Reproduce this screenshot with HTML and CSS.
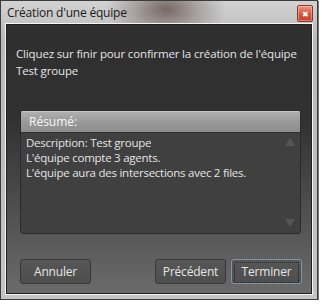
FILE: index.html
```html
<!DOCTYPE html>
<html lang="fr">
<head>
  <meta charset="UTF-8">
  <title>Création d'une équipe</title>
  <link rel="stylesheet" href="styles.css">
</head>
<body>

<!-- FENETRE -->
<div class="window">
  <div class="titlebar">
    <span class="title">Création d'une équipe</span>
    <span class="close">&#x2716;</span>
  </div>

  <div class="content">
    <p class="message">Cliquez sur finir pour confirmer la création de l'équipe<br>Test groupe</p>

    <!-- RESUME -->
    <div class="summary">
      <div class="summary-head">Résumé:</div>
      <div class="summary-body">
        <div class="lines">
          Description: Test groupe<br>
          L'équipe compte 3 agents.<br>
          L'équipe aura des intersections avec 2 files.
        </div>
        <div class="scroll">
          <span class="arrow up"></span>
          <span class="arrow down"></span>
        </div>
      </div>
    </div>

    <!-- BOUTONS -->
    <div class="buttons">
      <button class="btn">Annuler</button>
      <span class="spacer"></span>
      <button class="btn">Précédent</button>
      <button class="btn default"><span>Terminer</span></button>
    </div>
  </div>
</div>

</body>
</html>
```

FILE: styles.css
```css
body {
  margin: 0;
  background: #fff;
  font-family: "Open Sans", Arial, sans-serif;
  font-size: 12px;
}

.window {
  width: 318px;
  height: 300px;
  box-sizing: border-box;
  border: 1px solid #3c3c3c;
  padding: 0 4px 4px;
  display: flex;
  flex-direction: column;
  background:
    radial-gradient(ellipse 60px 34px at 165px 8px, rgba(90,70,66,0.75), rgba(90,70,66,0.3) 55%, rgba(90,70,66,0) 100%),
    linear-gradient(180deg, #d2d2d2, #b9b9b9 40px, #c4c4c4);
  box-shadow: 1px 1px 0 #777;
}

.titlebar {
  height: 22px;
  display: flex;
  align-items: center;
  justify-content: space-between;
  padding-left: 2px;
}

.title {
  color: #1b1b1b;
  letter-spacing: -0.2px;
}

.close {
  width: 14px;
  height: 15px;
  margin-top: 2px;
  border: 1px solid #8a3a2c;
  border-radius: 2px;
  background: linear-gradient(180deg, #f09580, #d65a43 50%, #c4412c);
  color: #fff;
  font-size: 8px;
  line-height: 15px;
  text-align: center;
  box-shadow: inset 0 0 0 1px rgba(255,255,255,0.35);
}

.content {
  flex: 1;
  border: 1px solid #f4f4f4;
  box-shadow: inset 0 0 0 1px #202020;
  background: linear-gradient(180deg, #2f2f2f, #313131 35%, #6b6b6b 100%);
  padding: 0 11px 0 14px;
  display: flex;
  flex-direction: column;
  color: #e4e4e4;
}

.message {
  margin: 21px 0 0 -4px;
  font-size: 11.5px;
  line-height: 17px;
  letter-spacing: -0.15px;
  white-space: nowrap;
}

.summary {
  margin-top: 31px;
  height: 124px;
  box-sizing: border-box;
  border: 1px solid #2a2a2a;
  border-radius: 3px;
  background: #404040;
  display: flex;
  flex-direction: column;
  overflow: hidden;
}

.summary-head {
  height: 21px;
  line-height: 21px;
  padding-left: 8px;
  color: #f6f6f6;
  background: linear-gradient(180deg, #b2b2b2, #9a9a9a 50%, #8d8d8d);
  border-bottom: 1px solid #2e2e2e;
  box-shadow: inset 0 1px 0 #c8c8c8;
}

.summary-body {
  flex: 1;
  display: flex;
}

.lines {
  flex: 1;
  padding: 2px 0 0 5px;
  font-size: 11.5px;
  line-height: 15px;
  letter-spacing: -0.25px;
}

.scroll {
  width: 20px;
  display: flex;
  flex-direction: column;
  justify-content: space-between;
  align-items: center;
  padding: 5px 0 6px;
}

.arrow {
  width: 0;
  height: 0;
  border-left: 5px solid transparent;
  border-right: 5px solid transparent;
}

.arrow.up {
  border-bottom: 8px solid #555;
}

.arrow.down {
  border-top: 8px solid #555;
}

.buttons {
  margin: 25px -1px 0 0;
  display: flex;
  gap: 5px;
}

.spacer {
  flex: 1;
}

.btn {
  width: 71px;
  height: 25px;
  padding: 0;
  border: 1px solid #383838;
  border-radius: 3px;
  background: linear-gradient(180deg, #575757, #4e4e4e);
  color: #e6e6e6;
  font-family: "Open Sans", Arial, sans-serif;
  font-size: 12px;
  letter-spacing: -0.2px;
}

.btn.default {
  border-color: #8193a8;
  padding: 2px;
}

.btn.default span {
  display: block;
  height: 100%;
  line-height: 17px;
  border: 1px dotted #222;
}
```
